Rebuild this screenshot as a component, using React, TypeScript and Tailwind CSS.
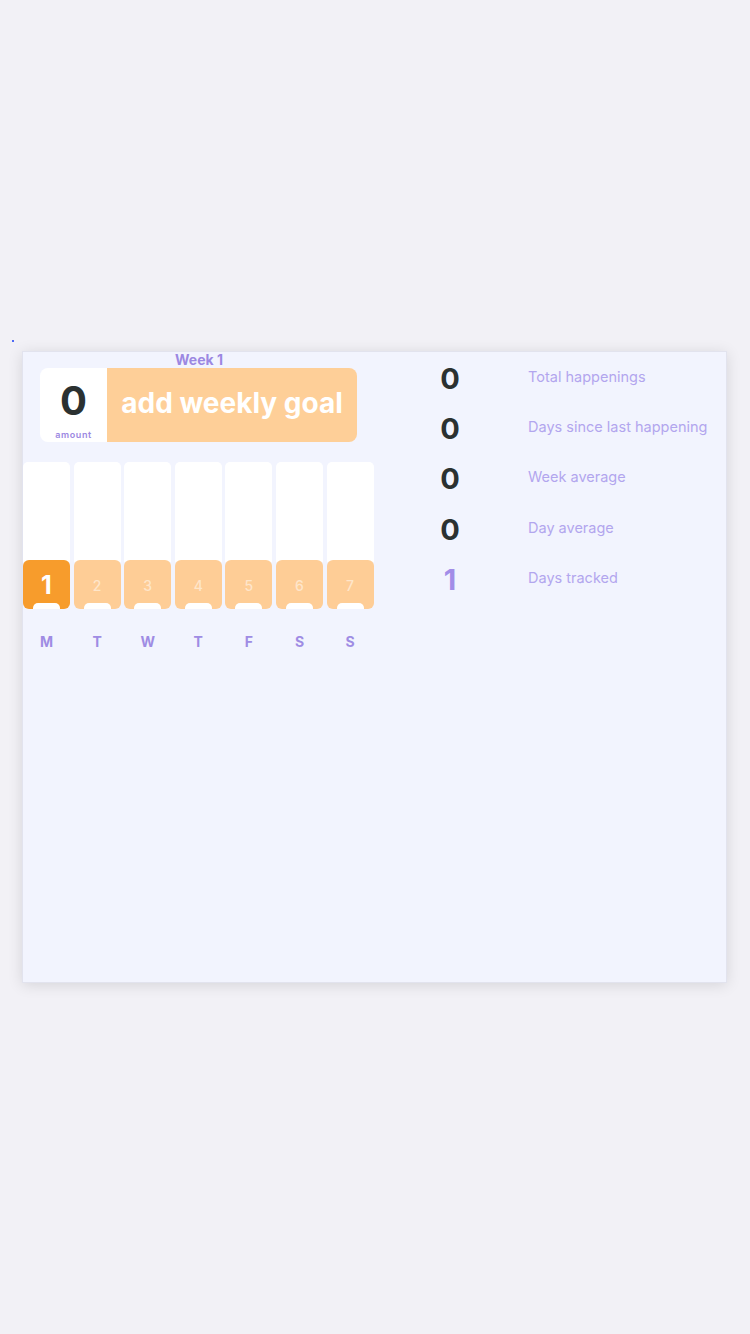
import React from "react";

const days = ["M", "T", "W", "T", "F", "S", "S"];

const stats = [
  { value: "0", label: "Total happenings" },
  { value: "0", label: "Days since last happening" },
  { value: "0", label: "Week average" },
  { value: "0", label: "Day average" },
  { value: "1", label: "Days tracked", accent: true },
];

function DayColumn({ index, active }: { index: number; active: boolean }) {
  return (
    <div className="flex w-[47px] flex-col items-center">
      <div className="flex h-[147px] w-full flex-col">
        <div className="w-full flex-1 rounded-t-[5px] bg-white" />
        <div
          className={
            active
              ? "relative -mt-[2px] flex h-[49px] w-full items-center justify-center rounded-[6px] bg-[#f79c2c]"
              : "relative -mt-[2px] flex h-[49px] w-full items-center justify-center rounded-[6px] bg-[#fecd96]"
          }
        >
          {active ? (
            <span className="pt-[2px] text-[25px] font-bold leading-none text-white">{index + 1}</span>
          ) : (
            <span className="pt-[2px] text-[14px] font-medium leading-none text-white/50">{index + 1}</span>
          )}
          <div className="absolute bottom-0 left-[10px] right-[10px] h-[6px] rounded-t-[5px] bg-white" />
        </div>
      </div>
      <div className="mt-[26px] text-[14px] font-bold leading-none text-[#9f8ce4]">{days[index]}</div>
    </div>
  );
}

export default function App() {
  return (
    <div
      className="min-h-[1334px] w-[750px] bg-[#f2f1f6] pt-[340px]"
      style={{ fontFamily: "Inter, 'Noto Sans', sans-serif" }}
    >
      <div className="ml-[12px] h-[2px] w-[2px] bg-[#4f6af5]" />
      <div className="ml-[22px] mt-[9px] flex h-[632px] w-[705px] border border-[#e2e3ee] bg-[#f2f4fe] shadow-[0_2px_14px_rgba(0,0,0,0.12)]">
        <div className="flex w-[351px] flex-col">
          <div className="flex h-[16px] items-center justify-center pl-[1px] text-[14px] font-bold leading-none text-[#9c88e2]">
            Week 1
          </div>
          <div className="ml-[17px] flex h-[74px] w-[317px]">
            <div className="flex w-[67px] flex-col items-center rounded-l-[8px] bg-white">
              <div className="mt-[13px] text-[40px] font-bold leading-none text-[#2b3131]">0</div>
              <div className="mt-auto pb-[3px] text-[9px] font-semibold leading-none tracking-[0.6px] text-[#9c88e2]">
                amount
              </div>
            </div>
            <div className="flex flex-1 items-center justify-center rounded-r-[8px] bg-[#fecf98] pb-[4px]">
              <span className="text-[28px] font-bold leading-none text-white">add weekly goal</span>
            </div>
          </div>
          <div className="mt-[20px] flex gap-[3.6px]">
            {days.map((_, i) => (
              <DayColumn key={i} index={i} active={i === 0} />
            ))}
          </div>
        </div>
        <div className="flex flex-col pl-[26px]">
          {stats.map((s) => (
            <div key={s.label} className="flex h-[50.3px] items-center">
              <div
                className={
                  s.accent
                    ? "w-[100px] pt-[2px] text-center text-[29px] font-bold leading-none text-[#a28de8]"
                    : "w-[100px] pt-[2px] text-center text-[29px] font-bold leading-none text-[#2b3131]"
                }
              >
                {s.value}
              </div>
              <div className="ml-[28px] text-[14.5px] leading-none text-[#b2a6ee]">{s.label}</div>
            </div>
          ))}
        </div>
      </div>
    </div>
  );
}
